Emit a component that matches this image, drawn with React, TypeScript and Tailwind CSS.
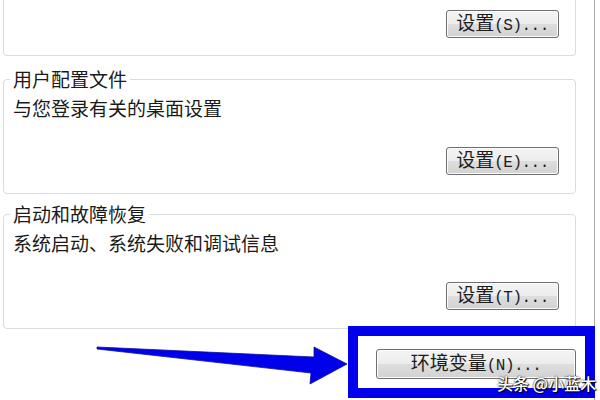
const cjk = "font-['Noto_Sans_CJK_SC','Noto_Sans',sans-serif]";

function WinButton({ label, hotkey, wide }: { label: string; hotkey: string; wide?: boolean }) {
  return (
    <div
      className={`flex items-center justify-center rounded-[3px] border border-[#6f6f6f] bg-[linear-gradient(#f4f4f4,#ececec_50%,#dedede_50%,#d2d2d2)] shadow-[inset_0_0_0_1px_#fbfbfb] text-[#1c1c1c] ${
        wide ? 'h-[30px] w-[200px]' : 'h-[28px] w-[113px]'
      }`}
    >
      <span className="whitespace-nowrap leading-[22px]">
        <span className={`${cjk} text-[19px]`}>{label}</span>
        <span className="font-['Liberation_Mono',monospace] text-[16px] tracking-[-0.5px]">({hotkey})...</span>
      </span>
    </div>
  );
}

function Group({ title, desc, hotkey, className }: { title: string; desc: string; hotkey: string; className: string }) {
  return (
    <fieldset className={`rounded-[4px] border border-[#d9dcde] ${className}`}>
      <legend className={`ml-[6px] px-[3px] ${cjk} text-[19px] leading-[22px] text-[#1a1a1a]`}>{title}</legend>
      <div className="flex flex-col pl-[9px] pr-[16px] pb-[18px]">
        <div className={`mt-[7px] ${cjk} text-[19px] leading-[22px] text-[#1a1a1a]`}>{desc}</div>
        <div className="mt-[28px] flex justify-end">
          <WinButton label="设置" hotkey={hotkey} />
        </div>
      </div>
    </fieldset>
  );
}

export default function App() {
  return (
    <div className="relative h-[400px] w-[600px] overflow-hidden bg-white">
      <div className="flex h-full w-[595px] flex-col border-r border-[#a8a8a8] pl-[3px] pr-[18px]">
        {/* first group is cut off at the top of the shot */}
        <div className="flex h-[56px] justify-end rounded-b-[4px] border-x border-b border-[#d9dcde] pr-[16px] pt-[10px]">
          <WinButton label="设置" hotkey="S" />
        </div>

        <Group className="mt-[12px]" title="用户配置文件" desc="与您登录有关的桌面设置" hotkey="E" />
        <Group className="mt-[9px]" title="启动和故障恢复" desc="系统启动、系统失败和调试信息" hotkey="T" />

        <div className="mt-[20px] flex justify-end">
          <WinButton label="环境变量" hotkey="N" wide />
        </div>
      </div>

      {/* annotation: blue frame + arrow + watermark */}
      <div className="absolute left-[348px] top-[326px] h-[72px] w-[247px] border-[10px] border-[#0000ea]" />
      <svg className="pointer-events-none absolute left-0 top-0" width="600" height="400" viewBox="0 0 600 400">
        <polygon
          points="97,347 314,357 314,347 347,364 310,384 311,373 97,349"
          fill="#0000ea"
          stroke="#10109a"
          strokeWidth="0.8"
          strokeLinejoin="round"
        />
      </svg>
      <div
        className={`absolute left-[497px] top-[372px] ${cjk} text-[16px] font-medium leading-[22px] text-white [text-shadow:0_0_2px_#000,1px_1px_1px_#000]`}
      >
        头条 @小蓝木
      </div>
    </div>
  );
}
